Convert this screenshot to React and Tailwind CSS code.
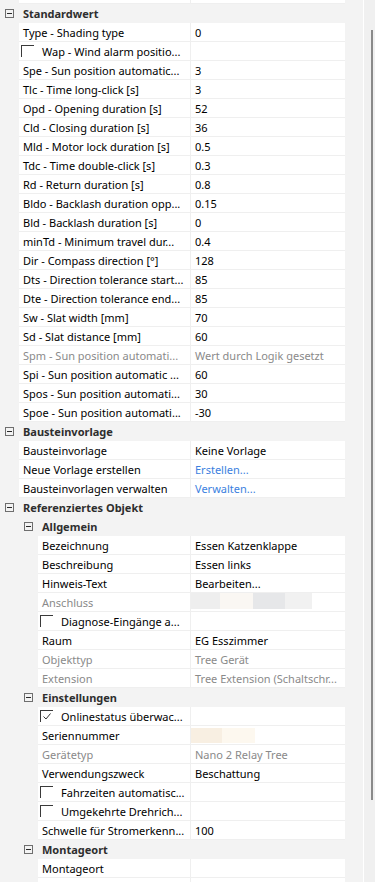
import React from "react";

const GRAY = "text-[#8a8a8a]";
const LINK = "text-[#3c7fe0]";

function Expander() {
  return (
    <span className="w-[9px] h-[9px] border border-[#6e6e6e] flex items-center justify-center shrink-0">
      <span className="w-[5px] h-px bg-[#2a2a2a]" />
    </span>
  );
}

function Header({ level = 1, text }) {
  return (
    <div className="flex h-[19px] shrink-0 items-center">
      <span className={level === 1 ? "ml-[5px]" : "ml-[24px]"}>
        <Expander />
      </span>
      <span className="ml-[9px] font-bold text-[#2e2e2e] whitespace-nowrap">{text}</span>
    </div>
  );
}

function CheckBox({ checked }) {
  return (
    <span className="w-[13px] h-[12px] border-t border-l border-[#3a3a3a] shrink-0 relative">
      {checked && (
        <svg className="absolute left-[1px] top-[1px]" width="10" height="9" viewBox="0 0 10 9">
          <polyline points="1.5,4.5 4,7 8.5,1.5" fill="none" stroke="#333" strokeWidth="1" />
        </svg>
      )}
    </span>
  );
}

function Prop({ level = 1, label, value, labelCls = "", valueCls = "", checkbox, checked, valueNode }) {
  return (
    <div className="flex h-[19px] shrink-0">
      <div className={level === 1 ? "w-[19px] shrink-0" : "w-[38px] shrink-0"} />
      <div className="flex flex-1 bg-white border-b border-[#efefef]">
        <div
          className={`${level === 1 ? "w-[172px]" : "w-[153px]"} shrink-0 border-r border-[#efefef] flex items-center overflow-hidden whitespace-nowrap ${checkbox ? "pl-[2px]" : "pl-[4px]"} ${labelCls}`}
        >
          {checkbox && <CheckBox checked={checked} />}
          <span className={checkbox ? "ml-[8px]" : ""}>{label}</span>
        </div>
        <div className={`flex-1 flex items-center pl-[4px] overflow-hidden whitespace-nowrap ${valueCls}`}>
          {valueNode ? valueNode : value}
        </div>
      </div>
    </div>
  );
}

export default function App() {
  return (
    <div
      className="w-[375px] h-[882px] overflow-hidden bg-[#f3f3f3] flex text-[11px] text-black leading-none"
      style={{ fontFamily: '"Noto Sans", "Open Sans", sans-serif' }}
    >
      <div className="w-[345px] shrink-0 flex flex-col">
        <div className="flex h-[4px] shrink-0">
          <div className="w-[19px] shrink-0" />
          <div className="flex flex-1 bg-white border-b border-[#efefef]">
            <div className="w-[172px] border-r border-[#efefef]" />
          </div>
        </div>

        <Header text="Standardwert" />
        <Prop label="Type - Shading type" value="0" />
        <Prop label="Wap - Wind alarm positio..." checkbox />
        <Prop label="Spe - Sun position automatic..." value="3" />
        <Prop label="Tlc - Time long-click [s]" value="3" />
        <Prop label="Opd - Opening duration [s]" value="52" />
        <Prop label="Cld - Closing duration [s]" value="36" />
        <Prop label="Mld - Motor lock duration [s]" value="0.5" />
        <Prop label="Tdc - Time double-click [s]" value="0.3" />
        <Prop label="Rd - Return duration [s]" value="0.8" />
        <Prop label="Bldo - Backlash duration opp..." value="0.15" />
        <Prop label="Bld - Backlash duration [s]" value="0" />
        <Prop label="minTd - Minimum travel dur..." value="0.4" />
        <Prop label="Dir - Compass direction [°]" value="128" />
        <Prop label="Dts - Direction tolerance start..." value="85" />
        <Prop label="Dte - Direction tolerance end..." value="85" />
        <Prop label="Sw - Slat width [mm]" value="70" />
        <Prop label="Sd - Slat distance [mm]" value="60" />
        <Prop label="Spm - Sun position automati..." value="Wert durch Logik gesetzt" labelCls={GRAY} valueCls={GRAY} />
        <Prop label="Spi - Sun position automatic ..." value="60" />
        <Prop label="Spos - Sun position automati..." value="30" />
        <Prop label="Spoe - Sun position automati..." value="-30" />

        <Header text="Bausteinvorlage" />
        <Prop label="Bausteinvorlage" value="Keine Vorlage" />
        <Prop label="Neue Vorlage erstellen" value="Erstellen..." valueCls={LINK} />
        <Prop label="Bausteinvorlagen verwalten" value="Verwalten..." valueCls={LINK} />

        <Header text="Referenziertes Objekt" />
        <Header level={2} text="Allgemein" />
        <Prop level={2} label="Bezeichnung" value="Essen Katzenklappe" />
        <Prop level={2} label="Beschreibung" value="Essen links" />
        <Prop level={2} label="Hinweis-Text" value="Bearbeiten..." />
        <Prop
          level={2}
          label="Anschluss"
          labelCls={GRAY}
          valueCls="items-start"
          valueNode={
            <div className="flex h-[16px] ml-[-7px]">
              <div className="w-[32px] bg-[#eeeeee]" />
              <div className="w-[33px] bg-[#faf7f3]" />
              <div className="w-[32px] bg-[#e6e7e9]" />
              <div className="w-[27px] bg-[#f1f1f1]" />
            </div>
          }
        />
        <Prop level={2} label="Diagnose-Eingänge a..." checkbox />
        <Prop level={2} label="Raum" value="EG Esszimmer" />
        <Prop level={2} label="Objekttyp" value="Tree Gerät" labelCls={GRAY} valueCls={GRAY} />
        <Prop level={2} label="Extension" value="Tree Extension (Schaltschr..." labelCls={GRAY} valueCls={GRAY} />

        <Header level={2} text="Einstellungen" />
        <Prop level={2} label="Onlinestatus überwac..." checkbox checked />
        <Prop
          level={2}
          label="Seriennummer"
          valueNode={
            <div className="flex h-[15px] ml-[-5px]">
              <div className="w-[32px] bg-[#f8efe2]" />
              <div className="w-[33px] bg-[#fdf8ef]" />
            </div>
          }
        />
        <Prop level={2} label="Gerätetyp" value="Nano 2 Relay Tree" labelCls={GRAY} valueCls={GRAY} />
        <Prop level={2} label="Verwendungszweck" value="Beschattung" />
        <Prop level={2} label="Fahrzeiten automatisc..." checkbox />
        <Prop level={2} label="Umgekehrte Drehrich..." checkbox />
        <Prop level={2} label="Schwelle für Stromerkenn..." value="100" />

        <Header level={2} text="Montageort" />
        <Prop level={2} label="Montageort" value="" />
        <Prop level={2} label="" value="" />
      </div>
      <div className="w-[18px] shrink-0" />
      <div className="w-px shrink-0 bg-white" />
      <div className="w-[11px] shrink-0 bg-[#f0f0f0] pt-[30px]">
        <div className="ml-[7px] w-[2px] h-[770px] bg-[#8a8a8a]" />
      </div>
    </div>
  );
}
